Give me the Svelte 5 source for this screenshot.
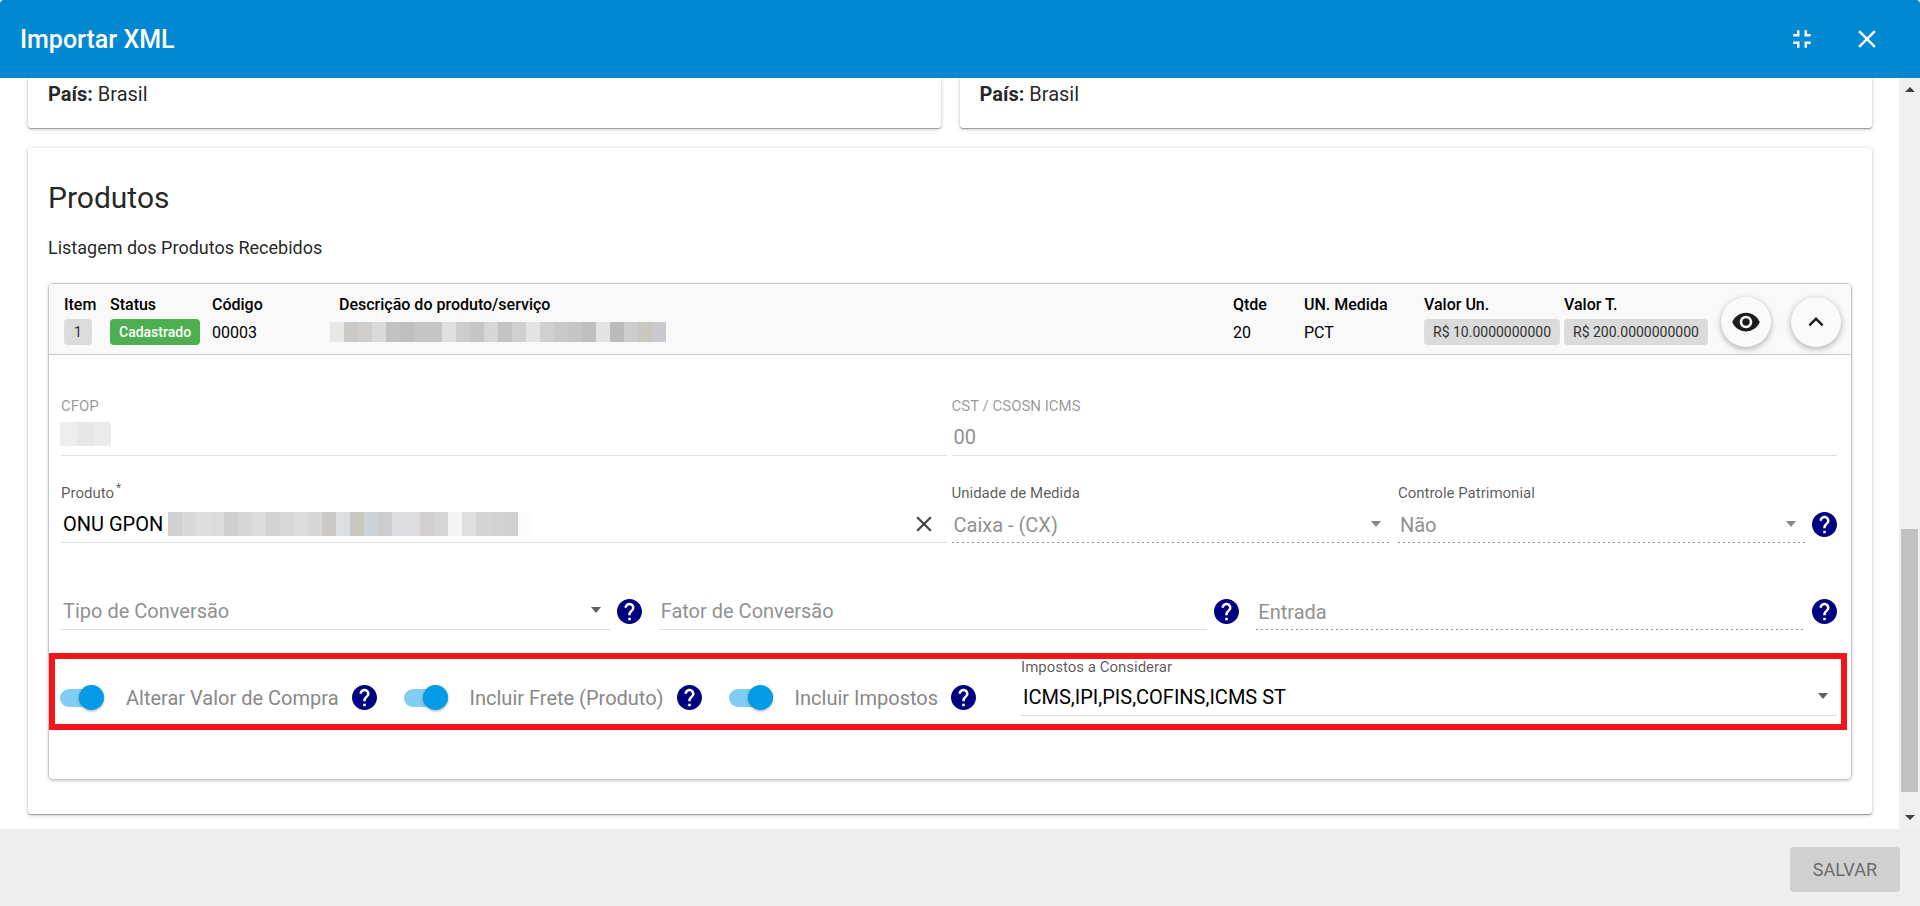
<script lang="ts">
  type Toggle = { id: string; label: string; on: boolean };

  const icons = {
    compress: 'M5 16h3v3h2v-5H5v2zm3-8H5v2h5V5H8v3zm6 11h2v-3h3v-2h-5v5zm2-11V5h-2v5h5V8h-3z',
    close: 'M19 6.41L17.59 5 12 10.59 6.41 5 5 6.41 10.59 12 5 17.59 6.41 19 12 13.41 17.59 19 19 17.59 13.41 12z',
    eye: 'M12 4.5C7 4.5 2.73 7.61 1 12c1.73 4.39 6 7.5 11 7.5s9.27-3.11 11-7.5c-1.73-4.39-6-7.5-11-7.5zM12 17c-2.76 0-5-2.24-5-5s2.24-5 5-5 5 2.24 5 5-2.24 5-5 5zm0-8c-1.66 0-3 1.34-3 3s1.34 3 3 3 3-1.34 3-3-1.34-3-3-3z',
    up: 'M7.41 15.41L12 10.83l4.59 4.58L18 14l-6-6-6 6z',
    help: 'M12 2C6.48 2 2 6.48 2 12s4.48 10 10 10 10-4.48 10-10S17.52 2 12 2zm1 17h-2v-2h2v2zm2.07-7.75l-.9.92C13.45 12.9 13 13.5 13 15h-2v-.5c0-1.1.45-2.1 1.17-2.83l1.24-1.26c.37-.36.59-.86.59-1.41 0-1.1-.9-2-2-2s-2 .9-2 2H8c0-2.21 1.79-4 4-4s4 1.79 4 4c0 .88-.36 1.68-.93 2.25z',
  };

  const descMask = [
    '#e8e8e7', '#cbcac9', '#cfcecd', '#d9dadc', '#c2c2c2', '#bfbfbf', '#c5c5c5', '#c5c5c5',
    '#dfe0e2', '#cdcccb', '#c6c6c7', '#d5d6d5', '#c5c4c3', '#cfd0d2', '#e4e4e4', '#d0d0cf',
    '#c9c9ca', '#c5c5c5', '#bfbfbf', '#e3e3e1', '#bbbbbb', '#cbccce', '#cbc8c4', '#c9cad0',
  ];
  const productMask = [
    '#d0d0cf', '#d9d9dc', '#dededf', '#dddcda', '#cfcfcf', '#d8d6d7', '#dbdddc', '#d3d3d1',
    '#d7d8da', '#dcdcdd', '#d8d7d5', '#cdc8c4', '#dce0e3', '#cac6c0', '#cdd2d6', '#cccccc',
    '#dddee1', '#dfdddf', '#d1cfd0', '#d5d7d8', '#f4f5f6', '#dfdfdf', '#d5d5d5', '#d3d3d3',
    '#d0d0d0', '#fbfbfb',
  ];
  const cfopMask = ['#eeeeee', '#e7e7e7', '#ebebeb'];

  let toggles: Toggle[] = $state([
    { id: 'alterar-valor', label: 'Alterar Valor de Compra', on: true },
    { id: 'incluir-frete', label: 'Incluir Frete (Produto)', on: true },
    { id: 'incluir-impostos', label: 'Incluir Impostos', on: true },
  ]);
  let produto = $state('ONU GPON');
</script>

{#snippet icon(path: string, cls: string)}
  <svg class={cls} viewBox="0 0 24 24" aria-hidden="true"><path d={path} /></svg>
{/snippet}

{#snippet help()}
  <button class="help" type="button" aria-label="Ajuda">
    <svg viewBox="2 2 20 20" aria-hidden="true"><path d={icons.help} /></svg>
  </button>
{/snippet}

{#snippet mask(colors: string[])}
  <span class="mask">
    {#each colors as color}<i style="background: {color}"></i>{/each}
  </span>
{/snippet}

<div class="dialog">
  <header class="toolbar">
    <h1>Importar XML</h1>
    <button type="button" aria-label="Restaurar">{@render icon(icons.compress, 'icon-lg')}</button>
    <button type="button" aria-label="Fechar">{@render icon(icons.close, 'icon-lg')}</button>
  </header>

  <div class="body">
    <main class="content">
      <div class="parties">
        <section class="card party"><b>País:</b> Brasil</section>
        <section class="card party"><b>País:</b> Brasil</section>
      </div>

      <section class="card products">
        <h2>Produtos</h2>
        <p class="subtitle">Listagem dos Produtos Recebidos</p>

        <div class="panel">
          <table class="summary">
            <colgroup>
              <col class="c-item" /><col class="c-status" /><col class="c-code" /><col />
              <col class="c-qty" /><col class="c-unit" /><col class="c-value" /><col class="c-total" />
              <col class="c-view" /><col class="c-toggle" />
            </colgroup>
            <tbody>
              <tr class="heads">
                <th>Item</th>
                <th>Status</th>
                <th>Código</th>
                <th class="desc-head">Descrição do produto/serviço</th>
                <th>Qtde</th>
                <th>UN. Medida</th>
                <th>Valor Un.</th>
                <th>Valor T.</th>
                <td class="tool" rowspan="2">
                  <button class="fab" type="button" aria-label="Visualizar">{@render icon(icons.eye, 'icon-lg')}</button>
                </td>
                <td class="tool" rowspan="2">
                  <button class="fab" type="button" aria-label="Recolher">{@render icon(icons.up, 'icon-lg')}</button>
                </td>
              </tr>
              <tr class="values">
                <td><span class="badge">1</span></td>
                <td><span class="badge ok">Cadastrado</span></td>
                <td>00003</td>
                <td><span class="desc-value">{@render mask(descMask)}</span></td>
                <td>20</td>
                <td>PCT</td>
                <td><span class="badge">R$ 10.0000000000</span></td>
                <td><span class="badge">R$ 200.0000000000</span></td>
              </tr>
            </tbody>
          </table>

          <form class="form">
            <div class="row">
              <div class="field disabled wide">
                <label for="cfop">CFOP</label>
                <div class="control">
                  <span class="cfop-mask">{@render mask(cfopMask)}</span>
                  <input id="cfop" disabled />
                </div>
              </div>
              <div class="field disabled wide">
                <label for="cst">CST / CSOSN ICMS</label>
                <div class="control"><input id="cst" value="00" disabled /></div>
              </div>
            </div>

            <div class="row">
              <div class="field wide">
                <label for="produto">Produto<sup>*</sup></label>
                <div class="control">
                  <input id="produto" class="short" bind:value={produto} required />
                  {@render mask(productMask)}
                  <button class="clear" type="button" aria-label="Limpar" onclick={() => (produto = '')}>
                    {@render icon(icons.close, 'icon')}
                  </button>
                </div>
              </div>
              <div class="pair wide">
                <div class="field locked unit">
                  <label for="unidade">Unidade de Medida</label>
                  <div class="control select">
                    <select id="unidade" disabled><option>Caixa - (CX)</option></select>
                  </div>
                </div>
                <div class="field locked asset">
                  <label for="controle">Controle Patrimonial</label>
                  <div class="control select">
                    <select id="controle" disabled><option>Não</option></select>
                  </div>
                </div>
                {@render help()}
              </div>
            </div>

            <div class="row thirds">
              <div class="pair">
                <div class="field">
                  <div class="control select placeholder">
                    <select aria-label="Tipo de Conversão"><option>Tipo de Conversão</option></select>
                  </div>
                </div>
                {@render help()}
              </div>
              <div class="pair">
                <div class="field">
                  <div class="control"><input aria-label="Fator de Conversão" placeholder="Fator de Conversão" /></div>
                </div>
                {@render help()}
              </div>
              <div class="pair">
                <div class="field locked">
                  <div class="control"><input aria-label="Entrada" placeholder="Entrada" disabled /></div>
                </div>
                {@render help()}
              </div>
            </div>

            <div class="highlight">
              {#each toggles as toggle (toggle.id)}
                <div class="toggle">
                  <input type="checkbox" role="switch" id={toggle.id} bind:checked={toggle.on} />
                  <label for={toggle.id}>{toggle.label}</label>
                  {@render help()}
                </div>
              {/each}
              <div class="field taxes">
                <label for="impostos">Impostos a Considerar</label>
                <div class="control select">
                  <select id="impostos"><option>ICMS,IPI,PIS,COFINS,ICMS ST</option></select>
                </div>
              </div>
            </div>
          </form>
        </div>
      </section>
    </main>

    <div class="scrollbar" aria-hidden="true">
      <span class="arrow arrow-up"></span>
      <div class="rail"><div class="thumb"></div></div>
      <span class="arrow arrow-down"></span>
    </div>
  </div>

  <footer class="actions">
    <button type="submit" disabled>SALVAR</button>
  </footer>
</div>

<style>
  :global(body) {
    margin: 0;
    background: #fff;
  }
  .dialog {
    display: flex;
    flex-direction: column;
    height: 100vh;
    overflow: hidden;
    border-radius: 4px 4px 0 0;
    font-family: Roboto, 'Liberation Sans', sans-serif;
    font-size: 20px;
    color: rgba(0, 0, 0, 0.87);
  }
  .dialog * {
    box-sizing: border-box;
  }
  button,
  input,
  select {
    font: inherit;
    color: inherit;
    border: 0;
    padding: 0;
    margin: 0;
    background: none;
  }
  svg {
    display: block;
    fill: currentColor;
  }
  :global(.icon) {
    width: 26px;
    height: 26px;
  }
  :global(.icon-lg) {
    width: 30px;
    height: 30px;
  }

  .toolbar {
    display: flex;
    align-items: center;
    gap: 35px;
    flex: none;
    height: 78px;
    padding: 0 38px 0 20px;
    background: #0288d1;
    color: #fff;
  }
  .toolbar h1 {
    flex: 1;
    margin: 0;
    font-size: 25px;
    font-weight: 500;
  }

  .body {
    display: flex;
    flex: 1;
    min-height: 0;
  }
  .content {
    flex: 1;
    min-width: 0;
    overflow: hidden;
    padding: 0 27px 0 28px;
  }
  .card {
    border-radius: 3px;
    background: #fff;
    box-shadow: 0 1px 4px rgba(0, 0, 0, 0.22), 0 1px 1px rgba(0, 0, 0, 0.3);
  }
  .parties {
    display: grid;
    grid-template-columns: 1fr 1fr;
    gap: 19px;
    margin-bottom: 20px;
  }
  .party {
    padding: 4px 20px 22px;
    border-radius: 0 0 3px 3px;
    line-height: 24px;
  }
  .products {
    padding: 32px 20px 34px;
  }
  h2 {
    margin: 0;
    font-size: 30px;
    font-weight: 400;
    line-height: 36px;
  }
  .subtitle {
    margin: 20px 0 23px;
    font-size: 18px;
    line-height: 24px;
  }

  .panel {
    border: 1px solid #c8c8c8;
    border-radius: 5px;
    box-shadow: 0 1px 3px rgba(0, 0, 0, 0.2);
  }
  .summary {
    width: 100%;
    table-layout: fixed;
    border-collapse: separate;
    border-spacing: 0;
    padding: 7px 0;
    border-bottom: 1px solid #c8c8c8;
    border-radius: 4px 4px 0 0;
    background: #f9f9f9;
    font-size: 16px;
    text-align: left;
    white-space: nowrap;
    color: #000;
  }
  .summary th,
  .summary td {
    padding: 0;
  }
  .summary th {
    font-weight: 500;
    height: 26px;
  }
  .summary .values td {
    height: 30px;
  }
  .summary .tool {
    vertical-align: bottom;
  }
  .summary th:first-child,
  .summary .values td:first-child {
    padding-left: 15px;
  }
  .summary .desc-head {
    padding-left: 9px;
  }
  .c-item { width: 61px; }
  .c-status { width: 102px; }
  .c-code { width: 118px; }
  .c-qty { width: 71px; }
  .c-unit { width: 120px; }
  .c-value { width: 140px; }
  .c-total { width: 157px; }
  .c-view { width: 70px; }
  .c-toggle { width: 60px; }
  .badge {
    display: inline-block;
    min-width: 28px;
    padding: 0 9px;
    border-radius: 4px;
    background: #dbdbdb;
    color: #333;
    font-size: 14px;
    line-height: 26px;
    text-align: center;
    vertical-align: middle;
  }
  .badge.ok {
    background: #4caf50;
    color: #fff;
    font-weight: 500;
  }
  .fab {
    display: flex;
    align-items: center;
    justify-content: center;
    width: 50px;
    height: 50px;
    border-radius: 50%;
    background: #fafafa;
    color: #1c1c1c;
    box-shadow: 0 2px 6px rgba(0, 0, 0, 0.3);
  }

  .mask {
    display: flex;
    height: 24px;
  }
  .mask i {
    width: 14px;
  }
  .desc-value .mask {
    height: 20px;
  }
  .cfop-mask .mask i {
    width: 17px;
  }

  .form {
    padding: 14px 0 49px;
  }
  .row {
    display: flex;
    align-items: flex-end;
    gap: 5px;
    height: 87px;
    padding: 0 14px 0 12px;
  }
  .wide {
    flex: 1 1 0;
    min-width: 0;
  }
  .pair {
    display: flex;
    align-items: flex-end;
    flex: 1 1 0;
    min-width: 0;
  }
  .thirds {
    gap: 17px;
  }
  .pair .field {
    flex: 1;
  }
  .pair .unit {
    flex: 14 1 0;
    margin-right: 8px;
  }
  .pair .asset {
    flex: 13 1 0;
  }
  .field label {
    display: block;
    font-size: 15px;
    line-height: 18px;
    color: rgba(0, 0, 0, 0.66);
  }
  .field sup {
    margin-left: 2px;
    font-size: 12px;
    line-height: 0;
  }
  .field.disabled label {
    color: rgba(0, 0, 0, 0.42);
  }
  .control {
    display: flex;
    align-items: center;
    height: 41px;
    padding: 4px 2px 0;
    border-bottom: 1px solid #dedede;
    color: #000;
  }
  .control input,
  .control select {
    flex: 1;
    min-width: 0;
    height: 30px;
    outline: 0;
    opacity: 1;
  }
  .control select {
    appearance: none;
  }
  .control .short {
    flex: none;
    width: 105px;
  }
  .disabled .control,
  .locked .control,
  .placeholder,
  .control input::placeholder {
    color: #919191;
    opacity: 1;
  }
  .locked .control {
    border-bottom: 0;
    background: repeating-linear-gradient(90deg, #919191 0 2px, transparent 2px 5px) bottom / 100% 1px no-repeat;
  }
  .cfop-mask {
    margin: 0 0 6px -3px;
  }
  .select::after {
    content: '';
    margin: 0 7px 2px 0;
    border: 5px solid transparent;
    border-top: 6px solid #616161;
    border-bottom: 0;
  }
  .locked .select::after {
    border-top-color: #888;
  }
  .clear {
    margin: 0 8px 0 auto;
    color: #444;
  }
  .help {
    flex: none;
    width: 25px;
    height: 25px;
    margin: 0 0 6px 7px;
    color: #000080;
  }

  .highlight {
    display: flex;
    align-items: flex-start;
    margin: 23px 4px 0 0;
    padding: 0 4px 8px 5px;
    border: 6px solid #f2151a;
  }
  .toggle {
    display: flex;
    align-items: center;
    gap: 13px;
    margin: 26px 27px 0 0;
    white-space: nowrap;
    color: #888;
  }
  .toggle label {
    margin-left: 9px;
  }
  .toggle .help {
    margin: 0;
  }
  .toggle input {
    position: relative;
    appearance: none;
    flex: none;
    width: 44px;
    height: 18px;
    border-radius: 9px;
    background: #bdbdbd;
  }
  .toggle input::before {
    content: '';
    position: absolute;
    top: -4px;
    left: 0;
    width: 25px;
    height: 25px;
    border-radius: 50%;
    background: #fafafa;
    box-shadow: 0 1px 3px rgba(0, 0, 0, 0.35);
  }
  .toggle input:checked {
    background: #81cdf3;
  }
  .toggle input:checked::before {
    left: auto;
    right: 0;
    background: #039be5;
  }
  .taxes {
    flex: 1;
    margin-left: 18px;
  }
  .taxes label {
    line-height: 16px;
  }

  .scrollbar {
    display: flex;
    flex-direction: column;
    align-items: center;
    width: 21px;
    padding: 9px 0;
    background: #f0f0f0;
  }
  .rail {
    display: flex;
    align-items: flex-end;
    flex: 1;
    width: 17px;
    margin: 9px 0 23px;
  }
  .thumb {
    width: 100%;
    height: 38%;
    background: #c1c1c1;
  }
  .arrow {
    border: 5px solid transparent;
  }
  .arrow-up {
    border-top: 0;
    border-bottom-color: #404040;
  }
  .arrow-down {
    border-bottom: 0;
    border-top-color: #404040;
  }

  .actions {
    display: flex;
    align-items: center;
    justify-content: flex-end;
    flex: none;
    height: 77px;
    padding: 4px 20px 0;
    background: #eee;
  }
  .actions button {
    height: 45px;
    padding: 0 23px;
    border-radius: 4px;
    background: #d0d0d0;
    color: #6b6b6b;
    font-size: 18px;
  }
</style>
